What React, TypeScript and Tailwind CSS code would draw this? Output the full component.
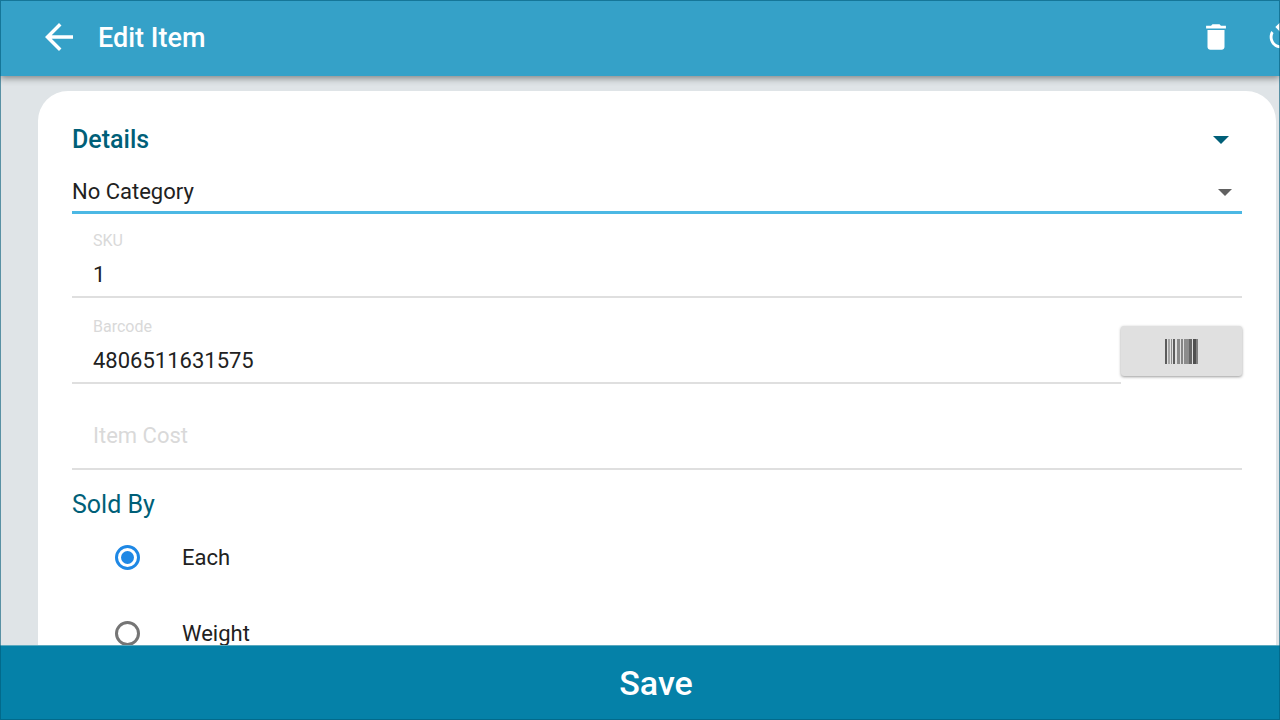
import type { ReactNode } from "react";

function IconButton({ label, children }: { label: string; children: ReactNode }) {
  return (
    <button type="button" aria-label={label} className="shrink-0 pb-0.5 text-white">
      {children}
    </button>
  );
}

type FieldProps = {
  id: string;
  label: string;
  value?: string;
};

function Field({ id, label, value }: FieldProps) {
  return (
    <div className="flex min-w-0 flex-1 flex-col border-b-2 border-[#dfdfdf] pt-4 pl-[21px]">
      {value !== undefined && (
        <label htmlFor={id} className="text-base leading-[22px] text-[#d9d9d9]">
          {label}
        </label>
      )}
      <input
        id={id}
        type="text"
        defaultValue={value}
        placeholder={label}
        aria-label={value === undefined ? label : undefined}
        className="h-11 w-full bg-transparent text-[22px] text-[#212121] outline-none placeholder:text-[#d9d9d9] placeholder-shown:h-[66px]"
      />
    </div>
  );
}

function RadioRow({ id, label, checked }: { id: string; label: string; checked?: boolean }) {
  return (
    <div className="flex h-[76px] items-center gap-[42px] pl-[43px]">
      <input
        id={id}
        type="radio"
        name="sold-by"
        defaultChecked={checked}
        className="size-[25px] shrink-0 appearance-none rounded-full border-3 border-[#757575] p-[3px] checked:border-[#1e88e5] checked:bg-[#1e88e5] checked:bg-clip-content"
      />
      <label htmlFor={id} className="text-[22px] text-[#212121]">
        {label}
      </label>
    </div>
  );
}

const bars = [
  [0, 2, "#5c5c5c"],
  [3, 2, "#a6a6a6"],
  [6, 1, "#8c8c8c"],
  [8, 2, "#5c5c5c"],
  [12, 3, "#8a8a8a"],
  [16, 2, "#858585"],
  [19, 5, "#8c8c8c"],
  [24, 3, "#666666"],
  [28, 3, "#505050"],
  [31, 2, "#808080"],
] as const;

export default function App() {
  return (
    <div className="relative flex h-screen flex-col overflow-hidden bg-[#dfe4e7] font-[Roboto,sans-serif]">
      <header className="relative z-10 flex h-[76px] shrink-0 items-center bg-[#35a1c8] pl-[38px] shadow-[0_2px_7px_rgba(0,0,0,0.45)]">
        <IconButton label="Back">
          <svg viewBox="0 0 24 24" className="size-[42px]" fill="currentColor">
            <path d="M20 11H7.83l5.59-5.59L12 4l-8 8 8 8 1.41-1.41L7.83 13H20v-2z" />
          </svg>
        </IconButton>
        <h1 className="flex-1 pl-[18px] text-[27px] font-medium text-white">Edit Item</h1>
        <div className="-mr-[18px] flex gap-[31px]">
          <IconButton label="Delete">
            <svg viewBox="0 0 24 24" className="size-[34px]" fill="currentColor">
              <path d="M6 19c0 1.1.9 2 2 2h8c1.1 0 2-.9 2-2V7H6v12zM19 4h-3.5l-1-1h-5l-1 1H5v2h14V4z" />
            </svg>
          </IconButton>
          <IconButton label="Sync">
            <svg viewBox="0 0 24 24" className="size-[34px]" fill="currentColor">
              <path d="M12 4V1L8 5l4 4V6c3.31 0 6 2.69 6 6 0 1.01-.25 1.97-.7 2.8l1.46 1.46C19.54 15.03 20 13.57 20 12c0-4.42-3.58-8-8-8zm0 14c-3.31 0-6-2.69-6-6 0-1.01.25-1.97.7-2.8L5.24 7.74C4.46 8.97 4 10.43 4 12c0 4.42 3.58 8 8 8v3l4-4-4-4v3z" />
            </svg>
          </IconButton>
        </div>
      </header>

      <main className="min-h-0 flex-1 overflow-y-auto pt-[15px] pr-1 pl-[38px] [scrollbar-width:none]">
        <form className="rounded-t-[30px] bg-white pt-8 pr-[34px] pb-6 pl-[34px]">
          <button
            type="button"
            aria-expanded="true"
            className="flex w-full items-center justify-between pr-[13px] text-[25px] leading-[33px] font-medium text-[#005f78]"
          >
            Details
            <svg viewBox="0 0 16 8" className="h-2 w-4" fill="currentColor">
              <path d="M0 0h16L8 8z" />
            </svg>
          </button>

          <div className="relative mt-[7px]">
            <select
              aria-label="Category"
              className="h-[51px] w-full appearance-none border-b-3 border-[#4cb8e4] bg-transparent pt-2 text-[22px] text-[#212121] outline-none"
            >
              <option>No Category</option>
            </select>
            <svg
              viewBox="0 0 14 7"
              className="pointer-events-none absolute top-[26px] right-[10px] h-[7px] w-3.5"
              fill="#616161"
            >
              <path d="M0 0h14L7 7z" />
            </svg>
          </div>

          <div className="flex flex-col gap-0.5">
            <Field id="sku" label="SKU" value="1" />
            <div className="flex items-start">
              <Field id="barcode" label="Barcode" value="4806511631575" />
              <button
                type="button"
                aria-label="Scan barcode"
                className="mt-[26px] flex h-[50px] w-[121px] shrink-0 items-center justify-center rounded-[3px] bg-[#e0e0e0] shadow-[0_1px_3px_rgba(0,0,0,0.4)]"
              >
                <svg viewBox="0 0 33 25" className="h-[25px] w-[33px]">
                  {bars.map(([x, width, fill]) => (
                    <rect key={x} x={x} y="0" width={width} height="25" fill={fill} />
                  ))}
                </svg>
              </button>
            </div>
            <Field id="item-cost" label="Item Cost" />
          </div>

          <fieldset className="mt-[21px]">
            <legend className="text-[25px] leading-7 text-[#005f78]">Sold By</legend>
            <RadioRow id="each" label="Each" checked />
            <RadioRow id="weight" label="Weight" />
          </fieldset>
        </form>
      </main>

      <button
        type="button"
        className="h-[75px] shrink-0 border-t border-[#5aa9bf] bg-[#0581a8] pl-8 text-[34px] font-medium text-white"
      >
        Save
      </button>

      <div className="pointer-events-none absolute inset-0 z-20 border border-[#005a78]/60" />
    </div>
  );
}
